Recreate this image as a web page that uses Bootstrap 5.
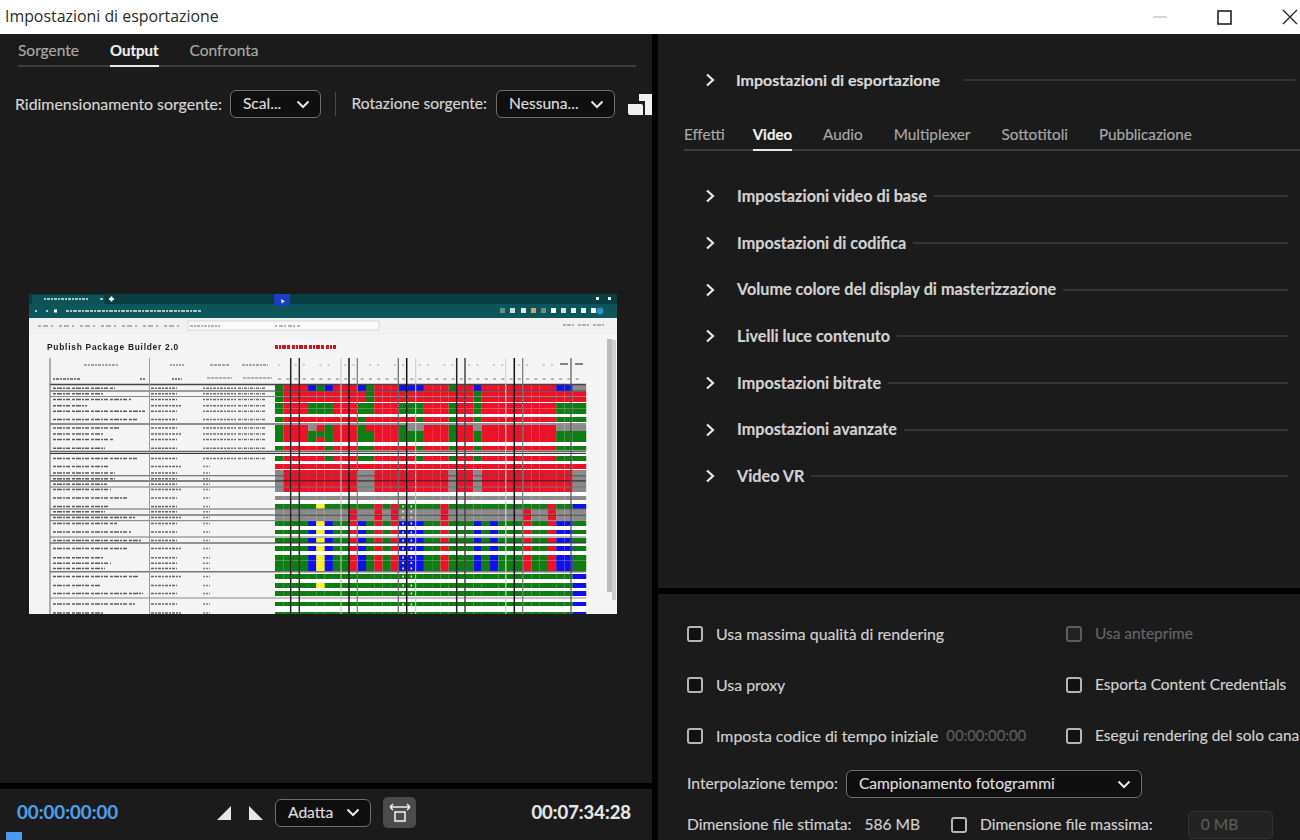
<!DOCTYPE html>
<html lang="it">
<head>
<meta charset="utf-8">
<title>Impostazioni di esportazione</title>
<link href="https://cdn.jsdelivr.net/npm/bootstrap@5.3.0/dist/css/bootstrap.min.css" rel="stylesheet">
<style>
html,body{height:100%;margin:0}
body{width:1300px;height:840px;overflow:hidden;background:#000;font-family:Lato,"Noto Sans",sans-serif;font-size:15.9px;color:#d2d2d2;-webkit-text-stroke:.15px}
.titlebar{height:34px;background:#fff;color:#2b2b2b;font-family:"Open Sans",sans-serif;font-size:15.9px;padding-left:5px;-webkit-text-stroke:0}
.winbtns{gap:50px;padding-right:2px}
.workarea{height:806px}
.leftcol{width:652px;gap:6px}
.rightcol{width:642px;margin-left:6px;gap:6px}
.pane{background:#1b1b1b}
.leftmain{height:749px;padding:0 16px 0 18px}
.leftfoot{height:51px;padding:0 21px 4px 17px;position:relative}
.rightmain{height:554px}
.rightfoot{height:246px;padding:0 0 0 29px}
.tabstrip{border-bottom:2px solid #3d3d3d;gap:31px;height:33px;align-items:flex-end;color:#a9a9a9;font-size:15.5px}
.tabitem{padding-bottom:5px;margin-bottom:-2px;border-bottom:2px solid transparent;line-height:20px}
.tabitem.on{color:#f0f0f0;border-bottom-color:#e8e8e8;font-weight:700;font-size:15px}
.srcbar{margin:23px -16px 0 -3px;height:28px;color:#d6d6d6;white-space:nowrap}
.picker{height:28px;background:#0f0f0f;border:1.5px solid #6e6e6e;border-radius:6px;color:#dedede;display:flex;align-items:center;justify-content:space-between;padding:0 10px 0 12px;font-size:15.6px;line-height:1;flex:none}
.w91{width:91px}.w119{width:119px}.w96{width:96px}.w296{width:296px}
.gaplabel{margin-right:8px}
.rotlabel{font-size:15.6px;margin-right:9px}
.vsep{width:1px;height:24px;background:#4a4a4a;margin:0 16px 0 14px}
.sourceicon{flex:none;margin-left:13px}
.framebox{display:block;margin:176px 0 0 11px;filter:blur(.7px)}
.tcblue{color:#4f9ee8;font-weight:700;font-size:18.7px;width:200px}
.tcwhite{color:#e6e6e6;font-weight:700;font-size:18.4px;margin-left:auto}
.triangle2{margin-left:18px}
.fitpicker{margin-left:12px}
.fitbtn{width:33px;height:31px;background:#4b4b4b;border-radius:5px;margin-left:12px}
.playhead{position:absolute;left:6px;bottom:0;width:16px;height:8px;background:#4a9bf0;border-radius:1px 1px 0 0}
.sechead{height:46.67px;padding-left:47px;font-weight:700;font-size:16.2px;color:#d2d2d2;white-space:nowrap}
.sechead svg{flex:none;margin-right:22px}
.sechead i{display:block;flex:1;height:2px;background:#343434;margin:0 12px 0 7px}
.exporthead{margin-top:23px;height:46px;padding-left:47px;font-weight:700;font-size:16px;color:#d8d8d8;white-space:nowrap}
.exporthead svg{flex:none;margin-right:21px}
.exporthead i{display:block;flex:1;height:2px;background:#343434;margin:0 5px 0 23px}
.righttabs{margin-left:26px;margin-top:11px;height:37px;gap:31px;margin-bottom:22px;font-size:15.3px}
.narrowtab{margin-right:-3px}
.checkgrid{display:grid;grid-template-columns:379px 1fr;grid-auto-rows:51px;margin-top:14px;white-space:nowrap}
.checkcell{display:flex;align-items:center;overflow:hidden}
.rightcheck{font-size:15.45px}
.form-check-input.boxy{width:16px;height:16px;margin:0 13px 0 0;background-color:#111;border:2px solid #b5b5b5;border-radius:3px;flex:none}
.form-check-input.boxy:disabled{opacity:1;border-color:#5d5d5d;background-color:#222}
.maxcheck{margin-left:31px!important}
.dimtext{color:#666}
.timehint{color:#5f5f5f;margin-left:8px;font-size:14.8px}
.interp{height:28px;margin-top:9px}
.interplabel{font-size:15.7px;margin-right:8px}
.sizerow{height:28px;margin-top:13px;white-space:nowrap;font-size:15.6px}
.sizeval{margin-left:13px}
.zeromb{width:85px;height:28px;border:1.5px solid #333;border-radius:5px;background:#232323;color:#5c5c5c;padding-left:12px;margin-left:35px;line-height:25px}
</style>
</head>
<body>
<div class="titlebar d-flex align-items-center justify-content-between">
  <span>Impostazioni di esportazione</span>
  <div class="d-flex align-items-center winbtns">
    <svg width="14" height="14" viewBox="0 0 14 14"><path d="M0 7h14" stroke="#c8c8c8" stroke-width="1.5"/></svg>
    <svg width="15" height="15" viewBox="0 0 15 15"><rect x="1" y="1" width="13" height="13" fill="none" stroke="#222" stroke-width="1.6"/></svg>
    <svg width="16" height="16" viewBox="0 0 16 16"><path d="M1 1l14 14M15 1L1 15" stroke="#222" stroke-width="1.3"/></svg>
  </div>
</div>
<div class="d-flex workarea">
  <div class="d-flex flex-column leftcol">
    <div class="pane leftmain">
      <div class="d-flex tabstrip">
        <div class="tabitem">Sorgente</div>
        <div class="tabitem on">Output</div>
        <div class="tabitem">Confronta</div>
      </div>
      <div class="d-flex align-items-center srcbar">
        <span class="gaplabel">Ridimensionamento sorgente:</span>
        <button type="button" class="btn picker w91">Scal...<svg width="14" height="9" viewBox="0 0 14 9"><path d="M1.5 1.5L7 7l5.5-5.5" fill="none" stroke="#e8e8e8" stroke-width="2"/></svg></button>
        <div class="vsep"></div>
        <span class="rotlabel">Rotazione sorgente:</span>
        <button type="button" class="btn picker w119">Nessuna...<svg width="14" height="9" viewBox="0 0 14 9"><path d="M1.5 1.5L7 7l5.5-5.5" fill="none" stroke="#e8e8e8" stroke-width="2"/></svg></button>
        <svg class="sourceicon" width="24" height="24" viewBox="0 0 24 24"><path d="M0 12h13q2 0 2 2v9H2q-2 0-2-2zM11 9V2h13v21h-7V9z" fill="#f0f0f0"/></svg>
      </div>
      <svg id="frame" class="framebox" width="588" height="320" viewBox="0 0 588 320" xmlns="http://www.w3.org/2000/svg"></svg>
    </div>
    <div class="pane leftfoot d-flex align-items-center">
      <div class="tcblue">00:00:00:00</div>
      <svg width="14" height="14" viewBox="0 0 14 14"><path d="M14 0v14H0z" fill="#e6e6e6"/></svg>
      <svg class="triangle2" width="14" height="14" viewBox="0 0 14 14"><path d="M0 0v14h14z" fill="#e6e6e6"/></svg>
      <button type="button" class="btn picker w96 fitpicker">Adatta<svg width="14" height="9" viewBox="0 0 14 9"><path d="M1.5 1.5L7 7l5.5-5.5" fill="none" stroke="#e8e8e8" stroke-width="2"/></svg></button>
      <div class="fitbtn d-flex align-items-center justify-content-center">
        <svg width="22" height="22" viewBox="0 0 22 22"><path d="M1 5h20M1 5l3-3M1 5l3 3M21 5l-3-3M21 5l-3 3" fill="none" stroke="#eee" stroke-width="1.5"/><rect x="6" y="10" width="10" height="9" fill="none" stroke="#eee" stroke-width="1.6"/></svg>
      </div>
      <div class="tcwhite">00:07:34:28</div>
      <div class="playhead"></div>
    </div>
  </div>
  <div class="d-flex flex-column rightcol">
    <div class="pane rightmain">
      <div class="d-flex align-items-center exporthead">
        <svg width="10" height="14" viewBox="0 0 10 14"><path d="M2 1.5L8 7l-6 5.5" fill="none" stroke="#e8e8e8" stroke-width="2.2"/></svg>
        Impostazioni di esportazione<i></i>
      </div>
      <div class="d-flex tabstrip righttabs">
        <div class="tabitem narrowtab">Effetti</div>
        <div class="tabitem on">Video</div>
        <div class="tabitem">Audio</div>
        <div class="tabitem">Multiplexer</div>
        <div class="tabitem">Sottotitoli</div>
        <div class="tabitem">Pubblicazione</div>
      </div>
      <div class="d-flex align-items-center sechead"><svg width="10" height="14" viewBox="0 0 10 14"><path d="M2 1.5L8 7l-6 5.5" fill="none" stroke="#e8e8e8" stroke-width="2.2"/></svg>Impostazioni video di base<i></i></div>
      <div class="d-flex align-items-center sechead"><svg width="10" height="14" viewBox="0 0 10 14"><path d="M2 1.5L8 7l-6 5.5" fill="none" stroke="#e8e8e8" stroke-width="2.2"/></svg>Impostazioni di codifica<i></i></div>
      <div class="d-flex align-items-center sechead"><svg width="10" height="14" viewBox="0 0 10 14"><path d="M2 1.5L8 7l-6 5.5" fill="none" stroke="#e8e8e8" stroke-width="2.2"/></svg>Volume colore del display di masterizzazione<i></i></div>
      <div class="d-flex align-items-center sechead"><svg width="10" height="14" viewBox="0 0 10 14"><path d="M2 1.5L8 7l-6 5.5" fill="none" stroke="#e8e8e8" stroke-width="2.2"/></svg>Livelli luce contenuto<i></i></div>
      <div class="d-flex align-items-center sechead"><svg width="10" height="14" viewBox="0 0 10 14"><path d="M2 1.5L8 7l-6 5.5" fill="none" stroke="#e8e8e8" stroke-width="2.2"/></svg>Impostazioni bitrate<i></i></div>
      <div class="d-flex align-items-center sechead"><svg width="10" height="14" viewBox="0 0 10 14"><path d="M2 1.5L8 7l-6 5.5" fill="none" stroke="#e8e8e8" stroke-width="2.2"/></svg>Impostazioni avanzate<i></i></div>
      <div class="d-flex align-items-center sechead"><svg width="10" height="14" viewBox="0 0 10 14"><path d="M2 1.5L8 7l-6 5.5" fill="none" stroke="#e8e8e8" stroke-width="2.2"/></svg>Video VR<i></i></div>
    </div>
    <div class="pane rightfoot">
      <div class="checkgrid">
        <div class="checkcell"><input class="form-check-input boxy" type="checkbox" aria-label="Usa massima qualità di rendering">Usa massima qualità di rendering</div>
        <div class="checkcell dimtext rightcheck"><input class="form-check-input boxy" type="checkbox" disabled aria-label="Usa anteprime">Usa anteprime</div>
        <div class="checkcell"><input class="form-check-input boxy" type="checkbox" aria-label="Usa proxy">Usa proxy</div>
        <div class="checkcell rightcheck"><input class="form-check-input boxy" type="checkbox" aria-label="Esporta Content Credentials">Esporta Content Credentials</div>
        <div class="checkcell"><input class="form-check-input boxy" type="checkbox" aria-label="Imposta codice di tempo iniziale">Imposta codice di tempo iniziale<span class="timehint">00:00:00:00</span></div>
        <div class="checkcell rightcheck"><input class="form-check-input boxy" type="checkbox" aria-label="Esegui rendering del solo canale alfa">Esegui rendering del solo canale alfa</div>
      </div>
      <div class="d-flex align-items-center interp">
        <span class="interplabel">Interpolazione tempo:</span>
        <button type="button" class="btn picker w296">Campionamento fotogrammi<svg width="14" height="9" viewBox="0 0 14 9"><path d="M1.5 1.5L7 7l5.5-5.5" fill="none" stroke="#e8e8e8" stroke-width="2"/></svg></button>
      </div>
      <div class="d-flex align-items-center sizerow">
        <span>Dimensione file stimata:</span><span class="sizeval">586 MB</span>
        <input class="form-check-input boxy maxcheck" type="checkbox" aria-label="Dimensione file massima">
        <span>Dimensione file massima:</span>
        <div class="zeromb">0 MB</div>
      </div>
    </div>
  </div>
</div>
<script>
(function(){
var ox=29,oy=294,out=[],CW=8.27;
function R(x,y,w,h,f,extra){out.push('<rect x="'+(x-ox)+'" y="'+(y-oy)+'" width="'+w+'" height="'+h+'" fill="'+f+'"'+(extra||'')+'/>');}
function L(x1,y1,x2,y2,c,w,dash){out.push('<line x1="'+(x1-ox)+'" y1="'+(y1-oy)+'" x2="'+(x2-ox)+'" y2="'+(y2-oy)+'" stroke="'+c+'" stroke-width="'+w+'"'+(dash?' stroke-dasharray="'+dash+'"':'')+'/>');}
/* page + browser chrome */
R(29,294,588,320,'#f4f4f4');
R(29,294,588,10,'#063e42');
R(29,304,588,14,'#0c5558');
R(29,318,588,17,'#f1f1f1');
R(32,295,72,9,'#0b5357');
L(44,299,88,299,'#a9c6c8',2,'2 1 3 1');
L(100,299,103,299,'#d8e4e4',1.5);
L(109,299,114,299,'#fff',2);L(111.5,296.5,111.5,301.5,'#fff',2);
L(35,311,37,311,'#a9d0d0',2);L(46,311,48,311,'#a9d0d0',2);
L(54,311,57,311,'#fff',3);
L(66,311,202,311,'#a8c8ca',2,'3 1 2 1 4 1');
/* right toolbar icons */
[[500,'#5c8f90'],[510,'#c7dcdc'],[521,'#dfeaea'],[531,'#d4a070'],[541,'#6c8c8c'],[551,'#fff'],[561,'#cfe0e0'],[571,'#e6f0f0'],[581,'#e6f0f0'],[591,'#f3f8f8']].forEach(function(a){R(a[0],308,5,5,a[1]);});
out.push('<circle cx="'+(600-ox)+'" cy="'+(311-oy)+'" r="3.5" fill="#2c8fd4"/>');
R(596,297,3,3,'#e8f0f0');R(608,297,3,3,'#e8f0f0');
/* page toolbar */
R(188,321,191,9,'#fafafa',' stroke="#d6d6d6" stroke-width="1"');
L(38,326,180,326,'#9a9a9a',1.5,'3 2 5 3 2 6');
L(190,326,220,326,'#9a9a9a',1.5,'3 1 2 1');
L(275,326,300,326,'#9a9a9a',1.5,'2 2 4 1');
L(563,325,605,325,'#9a9a9a',1.5,'3 1 4 1 2 4');
/* heading */
out.push('<text x="'+(47-ox)+'" y="'+(350-oy)+'" font-family="Liberation Sans,sans-serif" font-size="8.4" font-weight="700" letter-spacing=".75" fill="#222">Publish Package Builder 2.0</text>');
L(275,347,336,347,'#fff',7);
L(275,347,336,347,'#d8131f',4,'3 1 2 1 4 1 3 2');
/* grid */
var rows=[[385,6.5],[391.5,4.5],[397,5],[403,5.5],[408.5,5.5],[417,5],[425,6],[431,6],[437,5],[446,4.5],[456,5],[464,5],[470,6],[476,5.5],[481.5,5.5],[487,5],[496,4],[504,5],[509,5.5],[515,5],[521,5],[530,4],[538,5],[546,5],[555,5.5],[560.5,5.5],[566,5],[574,5],[583,5],[591,5],[602,4],[612,2]];
function mk(base,m){var a=[];for(var i=0;i<37;i++)a.push(base);for(var k in m){String(k).split(',').forEach(function(c){a[+c]=m[k];});}return a;}
var M=[
 mk('R',{'0,5,11,21':'G','4,6,10,15,16,17,24,34,35':'B','36':'K'}),
 mk('R',{'0,11,24':'G'}),mk('R',{'0,11,24':'G'}),
 mk('R',{'0,4,5,6,10,11,15,16,17,21,24,34,35,36':'G'}),mk('R',{'0,4,5,6,10,11,15,16,17,21,24,34,35,36':'G'}),
 mk('R',{'0,10,17,21,24,34,35,36':'G'}),
 mk('R',{'0,6,10,15,21':'G','4,16,17,24,34,35,36':'K'}),
 mk('R',{'0,4,5,6,10,11,15,16,17,21,24,34,35,36':'G'}),
 mk('R',{'0,4,6,10,11,15,16,17,21,24,34,35,36':'G'}),
 mk('R',{'0,6,10,11,17,21,24,34,35,36':'G'}),
 mk('R',{'0,6,10,11,17,21,24,34,35,36':'G'}),
 mk('R',{}),
 mk('R',{'0,10,11,21,24,36':'K'}),mk('R',{'0,10,11,21,24,36':'K'}),mk('R',{'0,10,11,21,24,36':'K'}),mk('R',{'0,10,11,21,24,36':'K'}),
 mk('K',{}),
 mk('G',{'5':'Y','12,14,20,33':'R','36':'B'}),
 mk('K',{'9,12,14,20,30,33':'R'}),mk('K',{'9,12,14,20,30,33':'R'})
];
var body=mk('G',{'4,6,10,15,16,17,24,26,34,35':'B','5':'Y','9,12,14,20,30,33':'R'});
for(var i=0;i<7;i++)M.push(body);
M.push(mk('G',{'36':'B'}));M.push(mk('G',{'5':'Y','36':'B'}));M.push(mk('G',{'36':'B'}));M.push(mk('G',{'36':'B'}));M.push(mk('G',{'36':'B'}));
var col={R:'#ee1228',G:'#0f7d12',B:'#1010e8',Y:'#fbf22a',K:'#8a8a8a'};
R(275,384,311,230,'#ffffff');
rows.forEach(function(r,ri){
  var y=r[0],h=r[1],m=M[ri];
  for(var c=0;c<37;c++){
    var x=275+c*CW,w=CW+.05;
    if(c==36){w=13.5;}
    R(x,y,w,h,col[m[c]]);
  }
  [15,16].forEach(function(c){ if(ri>16){R(275+c*CW+3.2,y+1.5,1.6,2,'#e8f4a0');} });
  var lw=[62,50,78,34,92,84,66,50,60,52,84,56,62,62,54,58,76,56,52,82,64,78,88,76,50,58,52,86,48,90,82,50][ri];
  L(53,y+h/2,53+lw,y+h/2,'#5c5c5c',1.7,'3 1 5 1 2 1 4 2');
  L(151,y+h/2,151+(ri%4==3?30:26),y+h/2,'#666',1.7,'3 1 2 1');
  if(ri<11){L(203,y+h/2,236,y+h/2,'#707070',1.5,'2 1 3 1');L(238,y+h/2,266,y+h/2,'#707070',1.5,'3 1 1 1');}
  else{L(203,y+h/2,210,y+h/2,'#808080',1.5,'2 1');}
});
/* horizontal separators */
[[384.5,'#444',1.3],[391,'#444',1.2],[396.5,'#888',1],[424,'#6e6e6e',1.4],[451.5,'#666',1.6],[453.5,'#333',1.2],[475.7,'#555',1.1],[481,'#111',1.1],[487,'#777',1],[509,'#666',1.1],[515,'#333',1.1],[520.7,'#777',1],[537,'#777',1],[543,'#333',1.1],[571.7,'#777',1.5],[598,'#888',1.2]].forEach(function(l){L(50,l[0],586,l[0],l[1],l[2]);});
/* vertical rules */
[[50,'#666',1],[149.5,'#9a9a9a',1],[290.7,'#222',1.5],[299.3,'#333',1.5],[341,'#c4c4c4',1],[349,'#111',1.5],[357.3,'#777',1.2],[398.3,'#666',1.2],[406.7,'#111',1.5],[415.7,'#c8c8c8',1],[456.7,'#222',1.5],[465,'#444',1.5],[505.7,'#cfcfcf',1],[514.3,'#111',1.5],[522.7,'#777',1.2],[571,'#555',1.2]].forEach(function(l){L(l[0],358,l[0],614,l[1],l[2]);});
/* header labels */
L(84,365,118,365,'#888',1.5,'3 1 2 1');L(170,365,184,365,'#888',1.5,'2 1');L(210,365,230,365,'#888',1.5,'3 1');L(242,365,268,365,'#888',1.5,'3 1 2 1');
L(53,379,80,379,'#555',1.5,'2 1 3 1');L(140,379,146,379,'#555',1.5,'2 1');L(172,379,182,379,'#555',1.5,'2 1');L(207,378,232,378,'#999',1.5,'3 1');L(243,378,272,378,'#999',1.5,'3 1');
for(var c=0;c<37;c++){var cx=278+c*CW;L(cx,379,cx+3,379,'#888',1.2);if(c%3!=1&&c<34)L(cx,365,cx+2,365,'#aaa',1.2);}
L(560,364,568,364,'#666',1.6);L(575,364,583,364,'#666',1.6);
/* scrollbar */
R(607,339,5,253,'#bdbdbd');R(612,340,4,260,'#cfcfcf');
/* blue pointer badge */
out.push('<path d="'+'M'+(274-ox)+' '+(294-oy)+'h16v8q0 4-4 4h-8q-4 0-4-4z" fill="#1c3fc4"/>');
out.push('<path d="M'+(281-ox)+' '+(299-oy)+'l4 2.5-2 .5-1 2z" fill="#fff"/>');
document.getElementById('frame').innerHTML=out.join('');
})();
</script>
<script src="https://cdn.jsdelivr.net/npm/bootstrap@5.3.0/dist/js/bootstrap.bundle.min.js"></script>
</body>
</html>
